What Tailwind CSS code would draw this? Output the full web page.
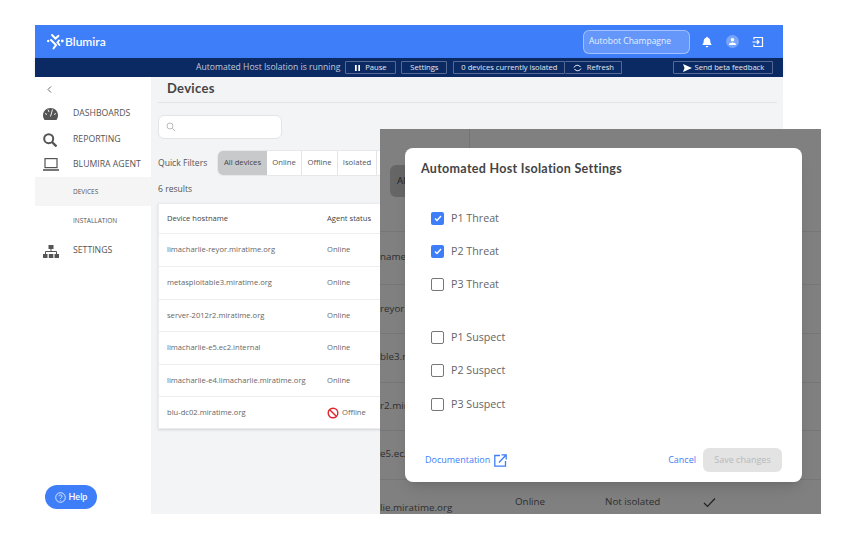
<!DOCTYPE html>
<html><head><meta charset="utf-8"><script src="https://cdn.jsdelivr.net/npm/@tailwindcss/browser@4"></script></head>
<body class="bg-white font-['Open_Sans',sans-serif]">
<div class="relative w-[845px] h-[536px] overflow-hidden bg-white">
  <div class="absolute left-[35px] top-[25px] w-[748px] h-[489px] flex flex-col">
    <header class="h-[33px] bg-[#3e7ef8] flex items-center pl-[12px] text-white shrink-0">
      <svg width="17" height="17" viewBox="0 0 17 17" fill="none" stroke="white" stroke-width="2" stroke-linecap="round"><path d="M5 2 8.500 5.500 11.500 2.800M4 7 9 12 6.500 15.500M12 7.500 10.500 9.500 12.500 12"/><circle cx="1.200" cy="8" r="1.200" fill="white" stroke="none"/><circle cx="15.300" cy="8" r="1.400" fill="white" stroke="none"/></svg>
      <span class="ml-[1px] text-[12px] font-semibold font-['Lato',sans-serif]">Blumira</span>
      <div class="ml-auto w-[107px] h-[24px] rounded-md border border-white/40 bg-white/20 text-[8.500px] text-white/85 flex items-center pl-[5px]">Autobot Champagne</div>
      <svg class="ml-[11px]" width="12" height="12" viewBox="0 0 12 12" fill="white"><path d="M6 .8c.6 0 .9.4.9.9 1.600.4 2.400 1.700 2.400 3.300 0 1.800.5 2.700 1.200 3.400v.6H1.500v-.6C2.200 7.700 2.700 6.800 2.700 5c0-1.600.8-2.900 2.400-3.300 0-.5.3-.9.900-.9ZM4.700 10h2.600c0 .8-.5 1.300-1.300 1.300S4.700 10.800 4.700 10Z"/></svg>
      <div class="ml-[13px] w-[13px] h-[13px] rounded-full bg-white/30 flex items-center justify-center">
        <svg width="9" height="9" viewBox="0 0 9 9" fill="white"><circle cx="4.500" cy="2.800" r="1.800"/><path d="M1 8c0-1.800 1.500-2.500 3.500-2.500S8 6.200 8 8Z"/></svg>
      </div>
      <svg class="ml-[13px] mr-[19px]" width="12" height="12" viewBox="0 0 12 12" fill="none" stroke="white" stroke-width="1.200"><path d="M2 3.500V1.500h8.500v9H2V8.500M.5 6h6M5 4l2 2-2 2"/></svg>
    </header>
    <div class="h-[19px] bg-[#0b2a63] flex items-center text-[7.600px] text-white/90 shrink-0 shadow-sm">
      <span class="ml-[161px] text-[8.600px] text-white/75">Automated Host Isolation is running</span>
      <div class="ml-[5px] w-[51px] h-[13px] border border-white/30 flex items-center justify-center gap-[5px] rounded-[1px]"><svg width="5" height="6" viewBox="0 0 5 6" fill="white"><rect width="1.700" height="6"/><rect x="3.300" width="1.700" height="6"/></svg><span>Pause</span></div>
      <div class="ml-[5px] w-[46px] h-[13px] border border-white/30 flex items-center justify-center rounded-[1px]">Settings</div>
      <div class="ml-[6px] w-[112px] h-[13px] border border-white/30 flex items-center justify-center rounded-[1px]">0 devices currently isolated</div>
      <div class="w-[57px] h-[13px] border border-l-0 border-white/30 flex items-center justify-center gap-[5px] rounded-[1px]"><svg width="9" height="8" viewBox="0 0 9 8" fill="none" stroke="white"><path d="M1 3.500C1.500 1.500 5.500 0 7.500 3M8 4.500C7.500 6.500 3.500 8 1.500 5"/></svg><span>Refresh</span></div>
      <div class="ml-[51px] w-[100px] h-[13px] border border-white/30 flex items-center justify-center gap-[3px] rounded-[1px]"><svg width="9" height="8" viewBox="0 0 9 8" fill="white"><path d="M0 0 9 4 0 8 1.500 4Z"/></svg><span>Send beta feedback</span></div>
    </div>
    <div class="flex-1 flex min-h-0">
      <nav class="w-[116px] bg-white shrink-0 text-[#555] text-[8.700px] relative">
        <svg class="ml-[12px] mt-[9px]" width="5" height="7" viewBox="0 0 5 7" fill="none" stroke="#666"><path d="M4 .5 1 3.500 4 6.500"/></svg>
        <div class="flex items-center h-[26px] mt-[8px]"><svg class="ml-[8px]" width="15" height="12" viewBox="0 0 15 12" fill="#555"><path d="M7.500 0C3.300 0 0 3.200 0 7.300c0 1.700.5 3.300 1.500 4.700h12c1-1.400 1.500-3 1.500-4.700C15 3.200 11.700 0 7.500 0Z"/><path d="M9.500 1.500 7.500 8.500M5 1.500 6 4M2 5.500 4 6.500M13 5.500 11 6.500" stroke="#fff" stroke-width=".9" fill="none"/></svg><span class="ml-[15px]">DASHBOARDS</span></div>
        <div class="flex items-center h-[25px]"><svg class="ml-[8px]" width="14" height="14" viewBox="0 0 14 14" fill="none" stroke="#555" stroke-width="2"><circle cx="5.700" cy="5.700" r="4.500"/><path d="M9 9l4.500 4.500" stroke-width="2.400"/></svg><span class="ml-[16px]">REPORTING</span></div>
        <div class="flex items-center h-[25px]"><svg class="ml-[8px]" width="16" height="13" viewBox="0 0 16 13" fill="none" stroke="#555" stroke-width="1.200"><rect x="2" y=".6" width="12" height="9"/><path d="M0 12h16" stroke-width="1.600"/></svg><span class="ml-[14px]">BLUMIRA AGENT</span></div>
        <div class="h-[29px] bg-[#f5f5f6] flex items-center pl-[38px] text-[6.500px]">DEVICES</div>
        <div class="h-[30px] flex items-center pl-[38px] text-[6.500px]">INSTALLATION</div>
        <div class="flex items-center h-[26px] mt-[2px]"><svg class="ml-[8px]" width="16" height="13" viewBox="0 0 16 13" fill="#555"><rect x="5.500" y="0" width="5" height="4"/><path d="M8 4v3M2.500 9V6.500h11V9" stroke="#555" fill="none"/><rect x="0" y="9" width="4.500" height="4"/><rect x="5.800" y="9" width="4.500" height="4"/><rect x="11.500" y="9" width="4.500" height="4"/></svg><span class="ml-[14px]">SETTINGS</span></div>
        <div class="absolute left-[10px] bottom-[5px] w-[52px] h-[24px] rounded-full bg-[#3e7ef8] text-white flex items-center justify-center gap-[3px] text-[9px] font-semibold font-['Lato',sans-serif]"><svg width="11" height="11" viewBox="0 0 11 11" fill="none" stroke="white" stroke-width=".8"><circle cx="5.500" cy="5.500" r="4.800"/><path d="M4 4.300c0-2 3-2 3 0 0 1.200-1.500 1.200-1.500 2.500M5.500 8v.6"/></svg><span>Help</span></div>
      </nav>
      <main class="flex-1 bg-[#f3f4f6] pl-[7px] pr-[6px] min-w-0 overflow-hidden">
        <div class="h-[26px] border-b border-[#e3e4e6] flex items-center pl-[9px] pb-[2px] text-[13px] font-bold text-[#444] font-['Lato',sans-serif] tracking-[.3px]">Devices</div>
        <div class="mt-[12px] w-[124px] h-[24px] bg-white border border-[#e3e4e6] rounded-md flex items-center pl-[7px]"><svg width="10" height="10" viewBox="0 0 10 10" fill="none" stroke="#bbb" stroke-width="1"><circle cx="4" cy="4" r="3"/><path d="M6.300 6.300 9 9"/></svg></div>
        <div class="mt-[11px] flex items-center h-[26px] text-[7.700px] text-[#555]">
          <span class="w-[59px] text-[8.600px]">Quick Filters</span>
          <div class="h-[26px] flex items-stretch rounded-l-md overflow-hidden border border-[#e8e8ea] bg-white">
            <span class="w-[49px] bg-[#c8c9cb] flex items-center justify-center text-[#444]">All devices</span>
            <span class="w-[35px] border-r border-[#e3e4e6] flex items-center justify-center">Online</span>
            <span class="w-[36px] border-r border-[#e3e4e6] flex items-center justify-center">Offline</span>
            <span class="w-[39px] border-r border-[#e3e4e6] flex items-center justify-center">Isolated</span>
            <span class="w-[40px]"></span>
          </div>
        </div>
        <div class="mt-[6px] h-[14px] text-[8.600px] text-[#555] leading-[14px]">6 results</div>
        <div class="mt-[7px] w-[260px] bg-white border border-[#ececee] shadow-sm text-[7.600px] text-[#666]">
          <div class="h-[30px] flex items-center pl-[8px] border-b border-[#eeeeef] text-[#444]"><span class="w-[160px]">Device hostname</span><span>Agent status</span></div>
          <div class="h-[33px] flex items-center pl-[8px] border-b border-[#eeeeef]"><span class="w-[160px]">limacharlie-reyor.miratime.org</span><span>Online</span></div>
          <div class="h-[33px] flex items-center pl-[8px] border-b border-[#eeeeef]"><span class="w-[160px]">metasploitable3.miratime.org</span><span>Online</span></div>
          <div class="h-[32px] flex items-center pl-[8px] border-b border-[#eeeeef]"><span class="w-[160px]">server-2012r2.miratime.org</span><span>Online</span></div>
          <div class="h-[33px] flex items-center pl-[8px] border-b border-[#eeeeef]"><span class="w-[160px]">limacharlie-e5.ec2.internal</span><span>Online</span></div>
          <div class="h-[32px] flex items-center pl-[8px] border-b border-[#eeeeef]"><span class="w-[160px]">limacharlie-e4.limacharlie.miratime.org</span><span>Online</span></div>
          <div class="h-[31px] flex items-center pl-[8px] pt-[1px]"><span class="w-[160px]">blu-dc02.miratime.org</span><svg width="12" height="12" viewBox="0 0 12 12" fill="none" stroke="#e3232b" stroke-width="1.400"><circle cx="6" cy="6" r="4.800"/><path d="M2.700 2.700 9.300 9.300"/></svg><span class="ml-[3px]">Offline</span></div>
        </div>
      </main>
    </div>
  </div>

  <!-- pasted dialog screenshot -->
  <div class="absolute left-[380px] top-[129px] w-[441px] h-[385px] bg-[#808080] overflow-hidden text-[9.800px] text-[#2e2e2e]">
    <div class="absolute left-[89px] top-0 w-px h-[19px] bg-[#737373]"></div>
    <div class="absolute left-[10px] top-[36px] w-[40px] h-[32px] rounded-md bg-[#666] pl-[7px] leading-[32px] text-[#222]">All</div>
    <div class="absolute left-0 top-[102px] w-full h-px bg-[#767676]"></div>
    <div class="absolute left-0 top-[155px] w-full h-px bg-[#767676]"></div>
    <div class="absolute left-0 top-[204px] w-full h-px bg-[#767676]"></div>
    <div class="absolute left-0 top-[253px] w-full h-px bg-[#767676]"></div>
    <div class="absolute left-0 top-[301px] w-full h-px bg-[#767676]"></div>
    <div class="absolute left-0 top-[350px] w-full h-px bg-[#767676]"></div>
    <span class="absolute left-0 top-[121px]">name</span>
    <span class="absolute left-0 top-[173px]">reyor.</span>
    <span class="absolute left-0 top-[221px]">ble3.n</span>
    <span class="absolute left-0 top-[270px]">r2.mir</span>
    <span class="absolute left-0 top-[318px]">e5.ec2</span>
    <span class="absolute left-0 top-[372px]">lie.miratime.org</span>
    <span class="absolute left-[135px] top-[366px]">Online</span>
    <span class="absolute left-[225px] top-[366px]">Not isolated</span>
    <svg class="absolute left-[323px] top-[368px]" width="13" height="11" viewBox="0 0 13 11" fill="none" stroke="#222" stroke-width="1.200"><path d="M1 6l3.500 3.500L12 1.500"/></svg>

    <div class="absolute left-[25px] top-[19px] w-[397px] h-[334px] bg-white rounded-lg shadow-lg flex flex-col pl-[16px] pr-[20px]">
      <h2 class="mt-[13px] h-[15px] leading-[15px] text-[12.500px] font-bold text-[#444] font-['Lato',sans-serif] tracking-[.3px]">Automated Host Isolation Settings</h2>
      <div class="mt-[26px] ml-[10px] flex flex-col text-[10.700px] text-[#666]">
        <label class="h-[33px] flex items-center gap-[7px]"><span class="w-[13px] h-[13px] rounded-[2px] bg-[#3e7ef8] flex items-center justify-center"><svg width="8" height="7" viewBox="0 0 8 7" fill="none" stroke="white" stroke-width="1.400"><path d="M1 3.500 3 5.500 7 1"/></svg></span>P1 Threat</label>
        <label class="h-[33px] flex items-center gap-[7px]"><span class="w-[13px] h-[13px] rounded-[2px] bg-[#3e7ef8] flex items-center justify-center"><svg width="8" height="7" viewBox="0 0 8 7" fill="none" stroke="white" stroke-width="1.400"><path d="M1 3.500 3 5.500 7 1"/></svg></span>P2 Threat</label>
        <label class="h-[33px] flex items-center gap-[7px]"><span class="w-[13px] h-[13px] rounded-[2px] border-[1.500px] border-[#777]"></span>P3 Threat</label>
        <div class="h-[20px]"></div>
        <label class="h-[33px] flex items-center gap-[7px]"><span class="w-[13px] h-[13px] rounded-[2px] border-[1.500px] border-[#777]"></span>P1 Suspect</label>
        <label class="h-[33px] flex items-center gap-[7px]"><span class="w-[13px] h-[13px] rounded-[2px] border-[1.500px] border-[#777]"></span>P2 Suspect</label>
        <label class="h-[33px] flex items-center gap-[7px] mt-[1px]"><span class="w-[13px] h-[13px] rounded-[2px] border-[1.500px] border-[#777]"></span>P3 Suspect</label>
      </div>
      <div class="mt-auto mb-[10px] h-[24px] flex items-center text-[9px] text-[#3e7ef8]">
        <span class="ml-[4px]">Documentation</span>
        <svg class="ml-[4px]" width="13" height="13" viewBox="0 0 13 13" fill="none" stroke="#3e7ef8" stroke-width="1.300"><path d="M6 1.500H.8v10.700h10.700V7M5 8.500 12 1M7.500.8h4.700v4.700"/></svg>
        <span class="ml-auto">Cancel</span>
        <span class="ml-[7px] w-[79px] h-[24px] rounded-md bg-[#e3e3e3] text-[#b9b9b9] flex items-center justify-center">Save changes</span>
      </div>
    </div>
  </div>
</div>
</body></html>
